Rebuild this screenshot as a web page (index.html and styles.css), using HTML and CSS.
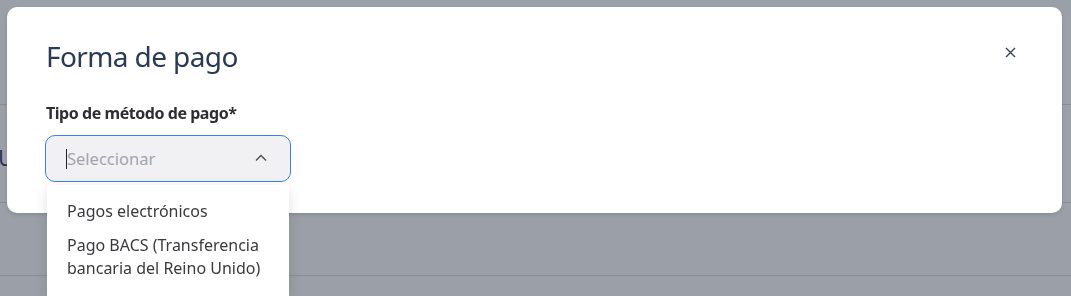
FILE: index.html
```html
<!DOCTYPE html>
<html lang="es">
<head>
    <meta charset="UTF-8">
    <title>Forma de pago</title>
    <link rel="stylesheet" href="styles.css">
</head>
<body>
    <div class="page">
        <div class="page-header"></div>
        <div class="page-row"><span class="page-text">U</span></div>
        <div class="page-row short"></div>
        <div class="page-row"></div>
    </div>

    <div class="overlay">
        <div class="modal">
            <div class="modal-header">
                <h2 class="modal-title">Forma de pago</h2>
                <button class="close-button" aria-label="Cerrar">
                    <svg width="11" height="11" viewBox="0 0 11 11">
                        <path d="M1 1 L10 10 M10 1 L1 10" stroke="#3d4153" stroke-width="1.4" fill="none"/>
                    </svg>
                </button>
            </div>
            <label class="field-label">Tipo de método de pago*</label>
            <div class="select">
                <div class="select-box">
                    <span class="caret"></span>
                    <span class="placeholder">Seleccionar</span>
                    <svg class="chevron" width="12" height="8" viewBox="0 0 12 8">
                        <path d="M1 6.5 L6 1.5 L11 6.5" stroke="#4a4a4f" stroke-width="1.3" fill="none"/>
                    </svg>
                </div>
                <ul class="options">
                    <li>Pagos electrónicos</li>
                    <li>Pago BACS (Transferencia bancaria del Reino Unido)</li>
                </ul>
            </div>
        </div>
    </div>
</body>
</html>
```

FILE: styles.css
```css
body {
    margin: 0;
    background: #fff;
    font-family: "Noto Sans", "Open Sans", sans-serif;
    overflow: hidden;
    height: 296px;
}

/* page behind the overlay */
.page-header {
    height: 104px;
    border-bottom: 1px solid #d8dbe0;
}

.page-row {
    height: 97px;
    border-bottom: 1px solid #d8dbe0;
    display: flex;
    align-items: center;
}

.page-row.short {
    height: 72px;
}

.page-row:last-child {
    height: 20px;
    border-bottom: none;
}

.page-text {
    margin-left: -2px;
    margin-top: 6px;
    font-size: 22px;
    color: #1e2a4a;
}

.overlay {
    position: fixed;
    inset: 0;
    background: rgba(55, 65, 81, 0.5);
    padding: 7px 9px 0 7px;
}

.modal {
    background: #fff;
    border-radius: 10px;
    height: 206px;
    box-sizing: border-box;
    padding: 29px 40px 0 39px;
    box-shadow: 0 2px 4px rgba(0, 0, 0, 0.12);
}

.modal-header {
    display: flex;
    justify-content: space-between;
    align-items: flex-start;
}

.modal-title {
    margin: 0;
    font-size: 28px;
    letter-spacing: -0.6px;
    font-weight: 400;
    color: #2a3a54;
    line-height: 40px;
}

.close-button {
    background: none;
    border: none;
    padding: 0;
    margin-top: 10px;
    margin-right: 6px;
    cursor: pointer;
}

.field-label {
    display: block;
    margin-top: 26px;
    font-size: 16px;
    letter-spacing: -0.45px;
    font-weight: 700;
    color: #2f2f33;
    line-height: 22px;
}

.select {
    position: relative;
    width: 245px;
    margin-top: 11px;
}

.select-box {
    height: 47px;
    box-sizing: border-box;
    margin-left: -1px;
    border: 1px solid #3b7ef0;
    border-radius: 10px;
    background: #f1f1f4;
    display: flex;
    align-items: center;
    padding: 0 23px 0 20px;
}

.caret {
    width: 1px;
    height: 20px;
    background: #222;
}

.placeholder {
    flex: 1;
    font-size: 16.5px;
    color: #a3a4ad;
}

.chevron {
    margin-bottom: 2px;
}

.options {
    position: absolute;
    top: 50px;
    left: 1px;
    width: 242px;
    margin: 0;
    padding: 15px 0 0 0;
    list-style: none;
    background: #fff;
    box-shadow: 0 4px 12px rgba(0, 0, 0, 0.12);
    height: 111px;
    box-sizing: border-box;
}

.options li {
    padding: 0 20px;
    font-size: 16px;
    line-height: 23px;
    color: #3a3a3e;
    margin-bottom: 11px;
}
```
